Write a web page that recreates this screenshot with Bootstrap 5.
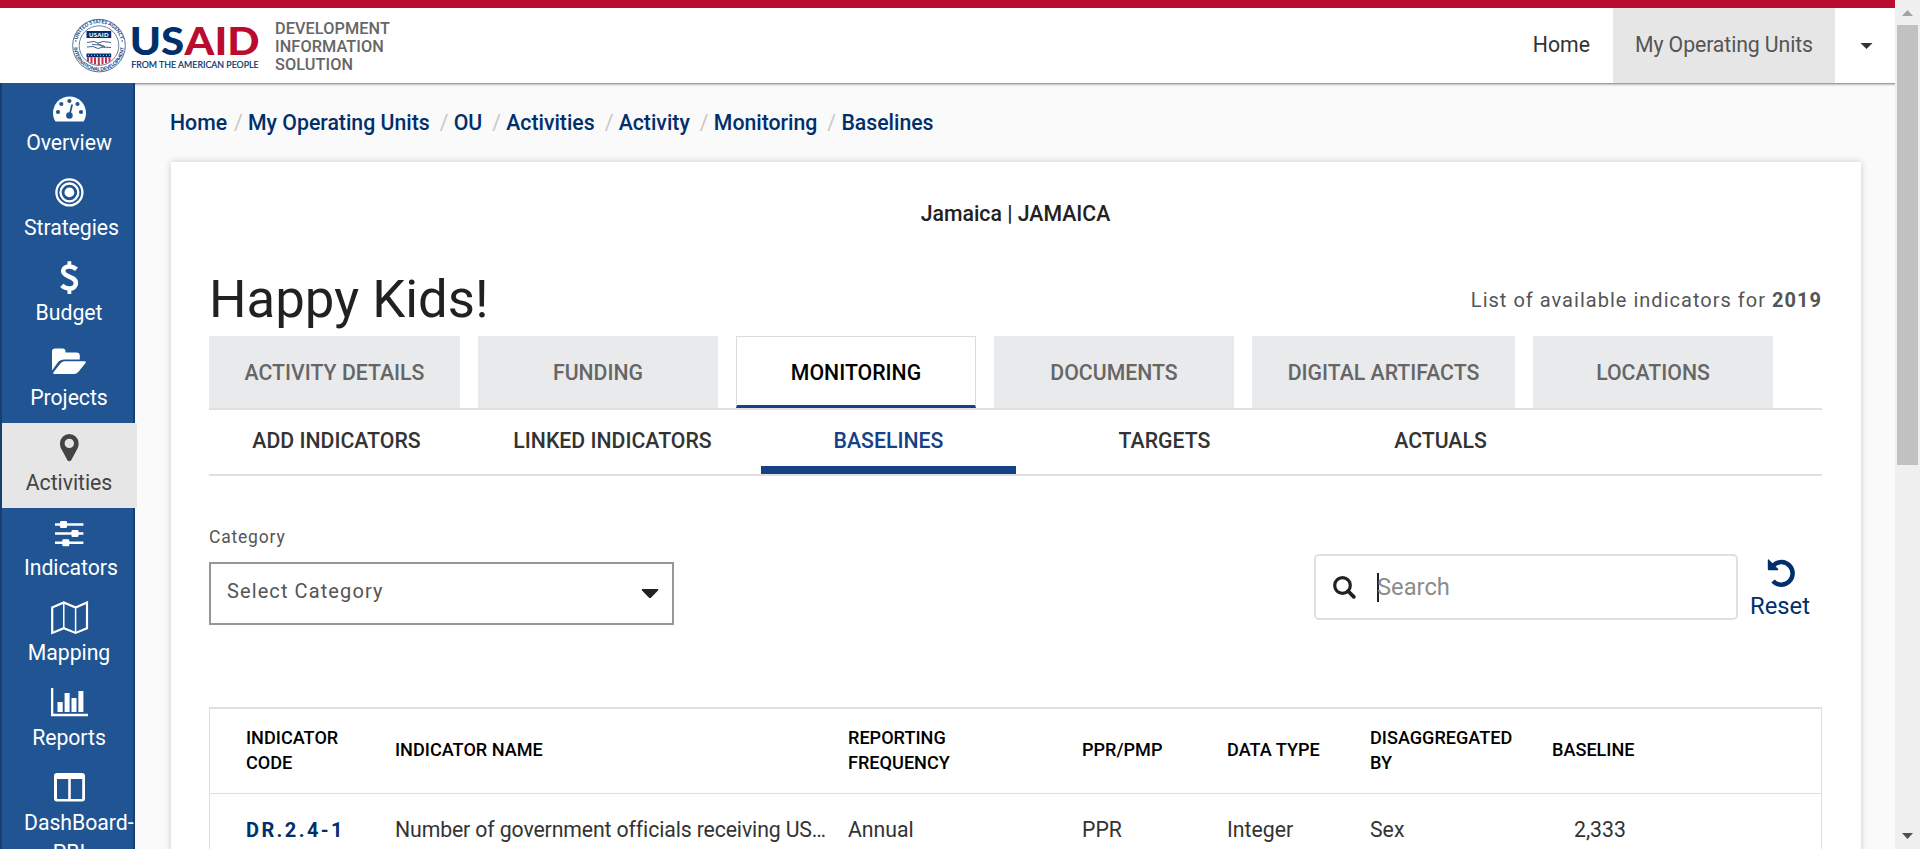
<!DOCTYPE html>
<html lang="en">
<head>
<meta charset="utf-8">
<title>Baselines - Development Information Solution</title>
<link rel="stylesheet" href="https://cdn.jsdelivr.net/npm/bootstrap@5.3.0/dist/css/bootstrap.min.css">
<style>
body{font-family:Roboto,"Liberation Sans",sans-serif;font-size:21.25px;line-height:30px;color:#212121;background:#fafafa;height:849px;overflow:hidden}
a{text-decoration:none;color:inherit}
.app-shell{height:849px}
.site-header{height:84px;border-top:8px solid #ba0c2f;background:#fff}
.site-logo{margin-left:72px;width:188px;height:60px;margin-top:7px;overflow:visible}
.product-name{font-size:16.25px;line-height:18px;font-weight:500;letter-spacing:.1px;color:#666;margin:11.5px 0 0 15px}
.top-link{height:75px;line-height:74px;color:#333;padding:0 23px}
.top-link.current{background:#e6e6e6;color:#555;width:222px;padding:0;text-align:center;letter-spacing:-.1px}
.top-caret{width:60px;height:75px}
.side-menu{width:135px;background:#205493;border:solid #173e71;border-width:0 2px;color:#fff}
.side-item{height:85px;padding-left:22px;width:112px;text-align:center;letter-spacing:-.05px}
.side-item svg{display:block;width:40px;height:44px;margin:0 0 1px 25px}
.side-item.current{background:#e6e6e6;color:#444;width:135px;position:relative;padding-right:23px}
.page-area{padding:0 36px;box-shadow:inset 0 1px 0 #a0a0a0,inset 0 3px 2px -1px #bbb}
.crumbs{padding-top:25px;height:79px;margin-left:-1px;font-weight:500;color:#002f6c;white-space:pre}
.crumbs .sep{color:#c8c8c8;font-weight:400;display:inline-block;text-align:right;width:24px}
.crumbs .sep:nth-child(2){width:21px}
.sheet{background:#fff;height:700px;box-shadow:0 0 7px rgba(0,0,0,.2);padding:37px 39px 0 38px}
.unit-name{font-weight:500;height:68px}
.title-row{height:69px}
.title-row h1{font-size:52.7px;line-height:64px;font-weight:400}
.year-note{font-size:20px;letter-spacing:1.02px;color:#555;margin-top:17.500px}
.main-tabs{gap:18px;border-bottom:2px solid #e0e0e0;height:74px}
.main-tab{width:240px;height:72px;line-height:73px;background:#e9eaeb;color:#666;font-weight:500;text-align:center}
.main-tab.current{background:#fff;color:#000;border:1px solid #dcdcdc;border-bottom:3px solid #164187;line-height:71px}
.sub-tabs{gap:21px;height:66px;border-bottom:2px solid #e0e0e0}
.sub-tab{width:255px;height:64px;line-height:62px;text-align:center;font-weight:500;color:#333}
.sub-tab.current{color:#164187;border-bottom:8px solid #164187}
.filters{height:231px;padding-top:48px}
.field-label{font-size:17.5px;line-height:26px;letter-spacing:.8px;color:#555;margin-bottom:12px}
.select-box{width:465px;height:63px;border:2px solid #979797;padding:0 13px 4px 16px;font-size:20px;letter-spacing:1.1px;color:#555}
.select-box span{margin-top:-2px}
.search-box{width:424px;height:66px;margin-top:30px;border:2px solid #e0e0e0;border-radius:5px;font-size:23.75px;color:#8c8c8c;padding-left:17px}
.text-cursor{width:2px;height:29px;background:#212121;margin-left:21px;margin-right:-2px}
.reset-btn{width:84px;margin-top:34px;color:#002f6c;font-size:23.75px;line-height:30px;text-align:center}
.reset-btn svg{display:block;margin:0 0 4px 29px}
.data-grid{table-layout:fixed;width:1613px;border:1px solid #e0e0e0;border-top-width:2px;border-collapse:separate;border-spacing:0;color:#333}
.data-grid th{height:85px;font-size:18.1px;line-height:25px;font-weight:500;color:#000;border-bottom:1px solid #e0e0e0;vertical-align:middle;padding:0 0 3px}
.data-grid td{height:71px;padding:0;vertical-align:middle}
.data-grid tr>:first-child{padding-left:36px}
.indicator-name{letter-spacing:-.12px}
.code-link{font-size:20px;font-weight:700;letter-spacing:2.4px;color:#002f6c}
.scroll-track{width:25px;background:#f0f0f0}
.scroll-thumb{width:21px;height:440px;background:#c1c1c1}
</style>
</head>
<body>
<div class="app-shell d-flex">
<div class="d-flex flex-column flex-grow-1" style="min-width:0">
<header class="site-header d-flex">
<svg class="site-logo" viewBox="72 15 188 60">
<defs><path id="ringTop" d="M76.6 45.6a22.4 22.4 0 1 1 44.8 0"/><path id="ringLow" d="M73.700 45.600a25.300 25.300 0 0 0 50.600 0"/></defs>
<circle cx="99" cy="45.600" r="26.300" fill="#fff" stroke="#54739f" stroke-width="1"/>
<circle cx="99" cy="45.600" r="19.800" fill="none" stroke="#54739f" stroke-width=".9"/>
<g fill="#24497f" font-family="Lato,sans-serif" font-weight="900" font-size="5">
<text><textPath href="#ringTop" startOffset="6" textLength="58">UNITED STATES AGENCY</textPath></text>
<text><textPath href="#ringLow" startOffset="2" textLength="75">INTERNATIONAL DEVELOPMENT</textPath></text></g>
<path d="M86.500 31h24.700v7h-24.700zM86.500 53.500h24.700v3.700h-24.700z" fill="#002f6c"/>
<text x="89" y="36.800" font-family="Lato,sans-serif" font-weight="900" font-size="6" fill="#fff" textLength="19.500">USAID</text>
<path d="M87 42.500l7-1 4 1.500 5-1.500 8 1M87 47l6-.5 5 2 5-1.500 8 .5M92 44.500l7 .5 6 2.500M97 43.500l8 3" fill="none" stroke="#45658f" stroke-width="1"/>
<path d="M88 57.200v4.500M91.500 57.200v6M95 57.200v7M98.800 57.200v7.800M102.500 57.200v7M106 57.200v6M109.500 57.200v4.500" stroke="#c5304d" stroke-width="2"/>
<path d="M88 55.300h22" stroke="#fff" stroke-width=".8" stroke-dasharray="1 2"/>
<circle cx="75.800" cy="41" r=".8" fill="#24497f"/><circle cx="122.300" cy="41" r=".8" fill="#24497f"/>
<g font-family="Lato,sans-serif"><text x="129.700" y="55.300" font-size="37.600" font-weight="900" fill="#002f6c" textLength="54.500" lengthAdjust="spacingAndGlyphs">US</text><text x="184.600" y="55.300" font-size="37.600" font-weight="900" fill="#ba0c2f" textLength="75" lengthAdjust="spacingAndGlyphs">AID</text>
<text x="131.200" y="68" font-size="9.400" fill="#002f6c" stroke="#002f6c" stroke-width=".2" textLength="127.500" lengthAdjust="spacingAndGlyphs">FROM THE AMERICAN PEOPLE</text></g>
</svg>
<div class="product-name">DEVELOPMENT<br>INFORMATION<br>SOLUTION</div>
<nav class="d-flex ms-auto">
<a class="top-link" href="#">Home</a><a class="top-link current" href="#">My Operating Units</a>
<a class="top-caret" href="#"><svg class="d-block" width="60" height="75"><path d="M25.500 35h12l-6 6z" fill="#333"/></svg></a>
</nav>
</header>
<div class="d-flex flex-grow-1" style="min-height:0">
<nav class="side-menu flex-shrink-0">
<a class="side-item d-block" href="#"><svg viewBox="0 0 40 44"><path d="M6.500 38.500C4.700 35.700 4 33 4 30a16.500 16.500 0 0 1 33 0c0 3-.7 5.700-2.500 8.500z" fill="#fff"/><g fill="#205493"><circle cx="9" cy="29" r="2.100"/><circle cx="12.300" cy="21" r="2.100"/><circle cx="20.400" cy="18" r="2.100"/><circle cx="28.500" cy="21" r="2.100"/><circle cx="32" cy="29" r="2.100"/><circle cx="20.400" cy="32.500" r="3.300"/></g><path d="M23 22l-2.400 10" stroke="#205493" stroke-width="1.700" stroke-linecap="round"/></svg>Overview</a>
<a class="side-item d-block" href="#"><svg viewBox="0 0 40 44" fill="none" stroke="#fff" stroke-width="2.300"><circle cx="20.400" cy="24.400" r="13"/><circle cx="20.400" cy="24.400" r="8.900"/><circle cx="20.400" cy="24.400" r="4.900" fill="#fff" stroke="none"/></svg>Strategies</a>
<a class="side-item d-block" href="#"><svg viewBox="0 0 40 44" fill="none" stroke="#fff"><path d="M20.400 8.300v6M20.400 35v6" stroke-width="3.800"/><path d="M27.500 16.200c-2.500-2-4.900-2.700-7.300-2.700-3.600 0-6 1.800-6 4.600 0 6.600 12.700 4.400 12.700 12.200 0 3.300-2.700 5.200-6.400 5.200-3 0-5.600-1.200-7.700-3.200" stroke-width="4.600"/></svg>Budget</a>
<a class="side-item d-block" href="#"><svg viewBox="0 0 40 44" fill="#fff"><path d="M3 32.500V13.500q0-3 3-3h7.500q3 0 3 3v1h11q3.300 0 3.300 3.300v3.700H15.500c-3 0-4.800.7-6.700 3z"/><path d="M15.800 23.200h19.800q2.200 0 .7 2l-6.800 8.500q-1.800 2.300-4.500 2.300H5.500q-2.200 0-.8-1.900l6.700-8.500q1.800-2.400 4.400-2.400z"/></svg>Projects</a>
<a class="side-item current d-block" href="#"><svg viewBox="0 0 40 44" fill="#444"><path fill-rule="evenodd" d="M20.300 11a9.300 9.300 0 0 1 9.300 9.400c0 2.400-.6 4-1.400 5.600l-6 11.200q-1.900 2-3.800 0L12.400 26c-.8-1.600-1.400-3.200-1.400-5.600A9.300 9.300 0 0 1 20.300 11zm0 4.700a4.700 4.700 0 1 0 0 9.400 4.700 4.700 0 0 0 0-9.400z"/></svg>Activities</a>
<a class="side-item d-block" href="#"><svg viewBox="0 0 40 44"><path d="M6 16.500h28.400M6 25.500h28.400M6 34.700h28.400" stroke="#fff" stroke-width="2.500"/><g fill="#fff"><rect x="11" y="13" width="7" height="7" rx="1.200"/><rect x="22.500" y="22" width="7" height="7" rx="1.200"/><rect x="13.300" y="31.200" width="7" height="7" rx="1.200"/></g></svg>Indicators</a>
<a class="side-item d-block" href="#"><svg viewBox="0 0 40 44" fill="none" stroke="#fff"><path d="M3.200 14.500L14.800 9.500l11.800 5L38 9.500v25.700l-11.400 4.700-11.800-4.700L3.200 39.900z" stroke-width="2.200"/><path d="M14.800 10v25M26.600 14v26" stroke-width="1.500"/></svg>Mapping</a>
<a class="side-item d-block" href="#"><svg viewBox="0 0 40 44" fill="#fff"><path d="M2 10h2.300v25.800H39V38.300H2zM8.500 24h5.200v10H8.500zM15.600 15h5v19h-5zM22.500 20h5v14h-5zM29.400 13h5v21h-5z"/></svg>Reports</a>
<a class="side-item d-block" href="#"><svg viewBox="0 0 40 44"><path fill="#fff" fill-rule="evenodd" d="M8 10h25q3 0 3 3v22.500q0 3-3 3H8q-3 0-3-3V13q0-3 3-3zm0 6v19.200q0 .8.8.800h10.400V16zm13.800 0v20h10.500q.9 0 .9-.8V16z"/></svg>DashBoard-<br>PBI</a>
</nav>
<main class="page-area flex-grow-1">
<nav class="crumbs"><a href="#">Home</a><span class="sep">/ </span><a href="#">My Operating Units</a><span class="sep">/ </span><a href="#">OU</a><span class="sep">/ </span><a href="#">Activities</a><span class="sep">/ </span><a href="#">Activity</a><span class="sep">/ </span><a href="#">Monitoring</a><span class="sep">/ </span><a href="#">Baselines</a></nav>
<section class="sheet">
<div class="unit-name text-center">Jamaica | JAMAICA</div>
<div class="title-row d-flex justify-content-between align-items-start"><h1 class="m-0">Happy Kids!</h1><div class="year-note">List of available indicators for <b>2019</b></div></div>
<div class="main-tabs d-flex"><a class="main-tab" style="width:251px" href="#">ACTIVITY DETAILS</a><a class="main-tab" href="#">FUNDING</a><a class="main-tab current" href="#">MONITORING</a><a class="main-tab" href="#">DOCUMENTS</a><a class="main-tab" style="width:263px" href="#">DIGITAL ARTIFACTS</a><a class="main-tab" href="#">LOCATIONS</a></div>
<div class="sub-tabs d-flex"><a class="sub-tab" href="#">ADD INDICATORS</a><a class="sub-tab" href="#">LINKED INDICATORS</a><a class="sub-tab current" href="#">BASELINES</a><a class="sub-tab" href="#">TARGETS</a><a class="sub-tab" href="#">ACTUALS</a></div>
<div class="filters d-flex align-items-start">
<div><div class="field-label">Category</div>
<div class="select-box d-flex align-items-center justify-content-between"><span>Select Category</span><svg width="18" height="10" style="margin-top:4px"><path d="M1.500 0h15q1.500.2.500 1.500L10.200 8.600q-1.200 1-2.400 0L1 1.500Q0 .2 1.500 0z" fill="#212121"/></svg></div></div>
<div class="search-box d-flex align-items-center ms-auto"><svg width="23" height="23" fill="none" stroke="#212121"><circle cx="9.500" cy="9.500" r="7.800" stroke-width="3.200"/><path d="M15 15l5.800 5.800" stroke-width="3.800" stroke-linecap="round"/></svg><span class="text-cursor"></span><span>Search</span></div>
<a class="reset-btn" href="#"><svg width="29" height="29"><path d="M6.500 7.200A11.300 11.300 0 1 1 6 23" fill="none" stroke="#002f6c" stroke-width="4.500"/><path d="M1.500 1.300l9.700 9.700q.5 1.200-.8 1.200H1.900q-1.100 0-1.100-1V2.300q0-1.300.7-1z" fill="#002f6c"/></svg>Reset</a>
</div>
<table class="data-grid">
<colgroup><col style="width:185px"><col style="width:453px"><col style="width:234px"><col style="width:145px"><col style="width:143px"><col style="width:182px"><col></colgroup>
<thead><tr><th>INDICATOR<br>CODE</th><th>INDICATOR NAME</th><th>REPORTING<br>FREQUENCY</th><th>PPR/PMP</th><th>DATA TYPE</th><th>DISAGGREGATED<br>BY</th><th>BASELINE</th></tr></thead>
<tbody><tr><td><a class="code-link" href="#">DR.2.4-1</a></td><td class="indicator-name">Number of government officials receiving US…</td><td>Annual</td><td>PPR</td><td>Integer</td><td>Sex</td><td style="padding-left:22px">2,333</td></tr></tbody>
</table>
</section>
</main>
</div>
</div>
<div class="scroll-track flex-shrink-0 d-flex flex-column align-items-center">
<svg width="25" height="25" class="flex-shrink-0"><path d="M7 16l5.500-6 5.500 6z" fill="#a3a3a3"/></svg>
<div class="scroll-thumb"></div>
<svg width="25" height="25" class="mt-auto flex-shrink-0"><path d="M7 9l5.500 6L18 9z" fill="#505050"/></svg>
</div>
</div>
<script src="https://cdn.jsdelivr.net/npm/bootstrap@5.3.0/dist/js/bootstrap.bundle.min.js"></script>
</body>
</html>
